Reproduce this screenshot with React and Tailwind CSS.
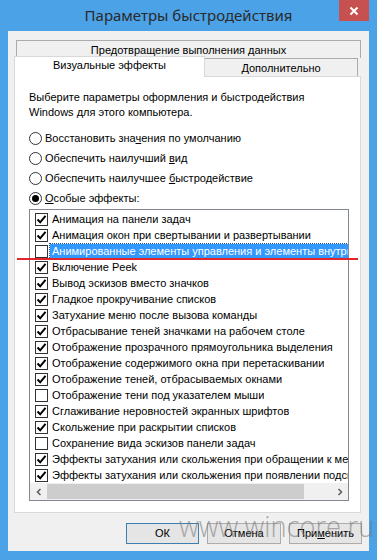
import React from "react";

const font = { fontFamily: '"Liberation Sans", Arial, sans-serif' };

const items = [
  ["Анимация на панели задач", true],
  ["Анимация окон при свертывании и развертывании", true],
  ["Анимированные элементы управления и элементы внутри окна", false, true],
  ["Включение Peek", true],
  ["Вывод эскизов вместо значков", true],
  ["Гладкое прокручивание списков", true],
  ["Затухание меню после вызова команды", true],
  ["Отбрасывание теней значками на рабочем столе", true],
  ["Отображение прозрачного прямоугольника выделения", true],
  ["Отображение содержимого окна при перетаскивании", true],
  ["Отображение теней, отбрасываемых окнами", true],
  ["Отображение тени под указателем мыши", false],
  ["Сглаживание неровностей экранных шрифтов", true],
  ["Скольжение при раскрытии списков", true],
  ["Сохранение вида эскизов панели задач", false],
  ["Эффекты затухания или скольжения при обращении к меню", true],
  ["Эффекты затухания или скольжения при появлении подсказок", true],
];

function Check({ on }) {
  return (
    <div className="w-[13px] h-[13px] border border-[#333333] bg-white flex items-center justify-center shrink-0">
      {on && (
        <svg width="11" height="11" viewBox="0 0 11 11">
          <path d="M1.5 5.5 L4.2 8.3 L9.5 1.8" fill="none" stroke="#000" strokeWidth="2" />
        </svg>
      )}
    </div>
  );
}

function Radio({ on, children }) {
  return (
    <div className="h-[20px] flex items-center">
      <div className="w-[13px] h-[13px] rounded-full border border-[#333333] bg-white flex items-center justify-center shrink-0">
        {on && <div className="w-[7px] h-[7px] rounded-full bg-black" />}
      </div>
      <span className="ml-[3px] text-[11px] text-black leading-[15px]">{children}</span>
    </div>
  );
}

export default function App() {
  return (
    <div className="relative w-[377px] h-[560px] bg-[#4ba2e6] flex flex-col overflow-hidden" style={font}>
      {/* Title bar */}
      <div className="relative h-[31px] flex items-center justify-center">
        <span
          className="text-[15px] text-[#2a2a2a] leading-none -mt-[1px]"
          style={{ fontFamily: '"Noto Sans", sans-serif' }}
        >
          Параметры быстродействия
        </span>
        <div className="absolute top-0 right-[8px] w-[30px] h-[21px] bg-[#c75050] flex items-center justify-center">
          <svg width="10" height="10" viewBox="0 0 10 10">
            <path d="M1.5 1.5 L8.5 8.5 M8.5 1.5 L1.5 8.5" stroke="#fff" strokeWidth="2" />
          </svg>
        </div>
      </div>

      {/* Client area */}
      <div className="flex-1 mx-[8px] mb-[9px] bg-[#f0f0f0] flex flex-col pt-[9px] px-[6px]">
        {/* Tabs row 1 */}
        <div className="ml-[2px] w-[345px] h-[18px] border border-b-0 border-[#acacac] bg-[#f0f0f0] flex items-center justify-center text-[11px] text-black leading-none pt-[1px]">
          Предотвращение выполнения данных
        </div>
        {/* Tabs row 2 */}
        <div className="flex -mt-[2px] h-[20px] items-end">
          <div className="relative z-10 w-[191px] h-[21px] -mb-[1px] bg-white border border-b-0 border-[#d9d9d9] flex items-center justify-center text-[11px] text-black leading-none pb-[3px]">
            Визуальные эффекты
          </div>
          <div className="w-[153px] h-[18px] border border-b-0 border-l-0 border-[#acacac] bg-[#f0f0f0] flex items-center justify-center text-[11px] text-black leading-none pt-[1px]">
            Дополнительно
          </div>
        </div>
        {/* Panel */}
        <div className="w-[347px] h-[437px] bg-white border border-[#d9d9d9] flex flex-col pl-[14px] pt-[13px]">
          <p className="text-[11px] leading-[15px] text-black">
            Выберите параметры оформления и быстродействия
            <br />
            Windows для этого компьютера.
          </p>
          <div className="mt-[8px] flex flex-col">
            <Radio>
              Восстановить зна<u>ч</u>ения по умолчанию
            </Radio>
            <Radio>
              Обеспечить наилучший <u>в</u>ид
            </Radio>
            <Radio>
              Обеспечить наилучшее <u>б</u>ыстродействие
            </Radio>
            <Radio on>
              <u>О</u>собые эффекты:
            </Radio>
          </div>
          {/* List box */}
          <div className="mt-[1px] w-[320px] h-[292px] border border-[#828790] bg-white flex flex-col overflow-hidden">
            <div className="pt-[1px] flex flex-col">
              {items.map(([t, on, sel], i) => (
                <div key={i} className="h-[16px] flex items-center pl-[5px] whitespace-nowrap">
                  <Check on={on} />
                  <span
                    className={
                      sel
                        ? "ml-[2px] pl-[2px] h-[15px] flex-1 bg-[#3399ff] text-white text-[11px] leading-[15px] outline outline-1 outline-dotted outline-[#1a4f99] overflow-hidden"
                        : "ml-[4px] text-[11px] leading-[15px] text-black overflow-hidden"
                    }
                  >
                    {t}
                  </span>
                </div>
              ))}
            </div>
            {/* Horizontal scrollbar */}
            <div className="mt-auto h-[17px] bg-[#f0f0f0] flex items-center">
              <div className="w-[17px] h-[17px] flex items-center justify-center">
                <svg width="8" height="8" viewBox="0 0 8 8">
                  <path d="M5.5 1 L2.5 4 L5.5 7" fill="none" stroke="#606060" strokeWidth="1.6" />
                </svg>
              </div>
              <div className="w-[257px] h-[15px] bg-[#cdcdcd]" />
              <div className="flex-1" />
              <div className="w-[17px] h-[17px] flex items-center justify-center">
                <svg width="8" height="8" viewBox="0 0 8 8">
                  <path d="M2.5 1 L5.5 4 L2.5 7" fill="none" stroke="#606060" strokeWidth="1.6" />
                </svg>
              </div>
            </div>
          </div>
        </div>
        {/* Buttons */}
        <div className="mt-[10px] flex justify-end gap-[8px] pr-[1px]">
          <div className="w-[73px] h-[21px] border border-[#3c7fb1] bg-[#e5e5e5] flex items-center justify-center text-[11px] text-black leading-none">
            ОК
          </div>
          <div className="w-[74px] h-[21px] border border-[#acacac] bg-[#e5e5e5] flex items-center justify-center text-[11px] text-black leading-none">
            Отмена
          </div>
          <div className="w-[73px] h-[21px] border border-[#acacac] bg-[#e5e5e5] flex items-center justify-center text-[11px] text-black leading-none">
            <span>
              При<u>м</u>енить
            </span>
          </div>
        </div>
      </div>

      {/* Red annotation line */}
      <div className="absolute top-[258px] left-[17px] w-[341px] h-[2px] bg-[#e3262d]" />

      {/* Watermark */}
      <div
        className="absolute left-[179px] top-[511px] text-[29px] leading-none text-[#7a7a7a] opacity-60 font-light origin-left scale-x-[0.94] pointer-events-none whitespace-nowrap"
        style={{ fontFamily: '"Open Sans", "Noto Sans", sans-serif' }}
      >
        www.wincore.ru
      </div>
    </div>
  );
}
